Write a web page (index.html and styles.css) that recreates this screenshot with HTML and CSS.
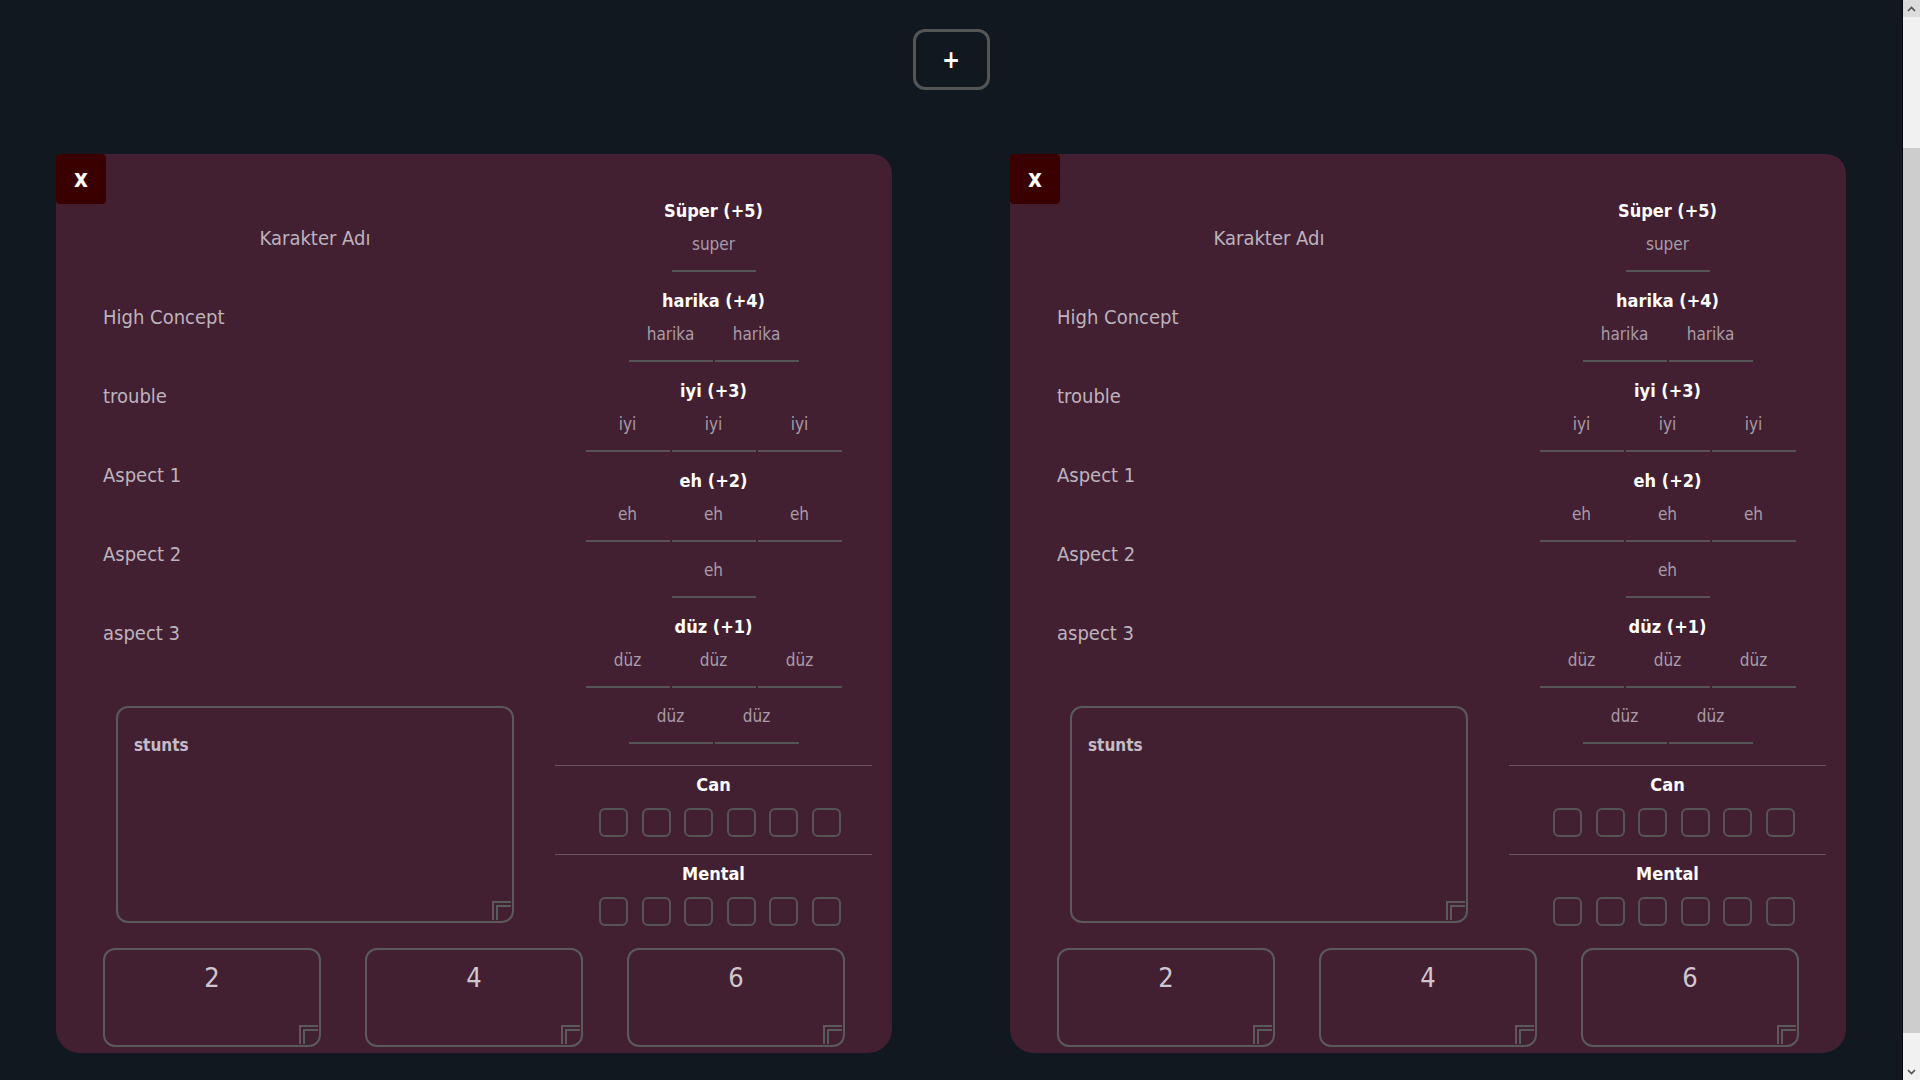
FILE: index.html
```html
<!DOCTYPE html>
<html lang="tr">
<head>
<meta charset="utf-8">
<title>Karakterler</title>
<link rel="stylesheet" href="styles.css">
</head>
<body>
<div class="page">
  <div class="toolbar"><button class="add-btn">+</button></div>
  <div class="cards">
    <section class="card">
      <button class="close-btn">x</button>
      <div class="card-top">
        <div class="aspects">
          <div class="field name">Karakter Adı</div>
          <div class="field">High Concept</div>
          <div class="field">trouble</div>
          <div class="field">Aspect 1</div>
          <div class="field">Aspect 2</div>
          <div class="field">aspect 3</div>
          <div class="stunts grip">stunts</div>
        </div>
        <div class="sheet">
          <div class="tier-title">Süper (+5)</div>
          <div class="tier-row"><span class="skill">super</span></div>
          <div class="tier-title">harika (+4)</div>
          <div class="tier-row"><span class="skill">harika</span><span class="skill">harika</span></div>
          <div class="tier-title">iyi (+3)</div>
          <div class="tier-row"><span class="skill">iyi</span><span class="skill">iyi</span><span class="skill">iyi</span></div>
          <div class="tier-title">eh (+2)</div>
          <div class="tier-row"><span class="skill">eh</span><span class="skill">eh</span><span class="skill">eh</span></div>
          <div class="tier-row"><span class="skill">eh</span></div>
          <div class="tier-title">düz (+1)</div>
          <div class="tier-row"><span class="skill">düz</span><span class="skill">düz</span><span class="skill">düz</span></div>
          <div class="tier-row"><span class="skill">düz</span><span class="skill">düz</span></div>
          <div class="stress stress-first">
            <div class="stress-title">Can</div>
            <div class="boxes"><span class="box"></span><span class="box"></span><span class="box"></span><span class="box"></span><span class="box"></span><span class="box"></span></div>
          </div>
          <div class="stress">
            <div class="stress-title">Mental</div>
            <div class="boxes"><span class="box"></span><span class="box"></span><span class="box"></span><span class="box"></span><span class="box"></span><span class="box"></span></div>
          </div>
        </div>
      </div>
      <div class="consequences">
        <div class="cons grip">2</div>
        <div class="cons grip">4</div>
        <div class="cons grip">6</div>
      </div>
    </section>
    <section class="card">
      <button class="close-btn">x</button>
      <div class="card-top">
        <div class="aspects">
          <div class="field name">Karakter Adı</div>
          <div class="field">High Concept</div>
          <div class="field">trouble</div>
          <div class="field">Aspect 1</div>
          <div class="field">Aspect 2</div>
          <div class="field">aspect 3</div>
          <div class="stunts grip">stunts</div>
        </div>
        <div class="sheet">
          <div class="tier-title">Süper (+5)</div>
          <div class="tier-row"><span class="skill">super</span></div>
          <div class="tier-title">harika (+4)</div>
          <div class="tier-row"><span class="skill">harika</span><span class="skill">harika</span></div>
          <div class="tier-title">iyi (+3)</div>
          <div class="tier-row"><span class="skill">iyi</span><span class="skill">iyi</span><span class="skill">iyi</span></div>
          <div class="tier-title">eh (+2)</div>
          <div class="tier-row"><span class="skill">eh</span><span class="skill">eh</span><span class="skill">eh</span></div>
          <div class="tier-row"><span class="skill">eh</span></div>
          <div class="tier-title">düz (+1)</div>
          <div class="tier-row"><span class="skill">düz</span><span class="skill">düz</span><span class="skill">düz</span></div>
          <div class="tier-row"><span class="skill">düz</span><span class="skill">düz</span></div>
          <div class="stress stress-first">
            <div class="stress-title">Can</div>
            <div class="boxes"><span class="box"></span><span class="box"></span><span class="box"></span><span class="box"></span><span class="box"></span><span class="box"></span></div>
          </div>
          <div class="stress">
            <div class="stress-title">Mental</div>
            <div class="boxes"><span class="box"></span><span class="box"></span><span class="box"></span><span class="box"></span><span class="box"></span><span class="box"></span></div>
          </div>
        </div>
      </div>
      <div class="consequences">
        <div class="cons grip">2</div>
        <div class="cons grip">4</div>
        <div class="cons grip">6</div>
      </div>
    </section>
  </div>
</div>
<div class="scrollbar" aria-hidden="true">
  <div class="sb-btn sb-up"><svg width="9" height="6" viewBox="0 0 9 6"><polyline points="1,5 4.5,1.5 8,5" fill="none" stroke="#505050" stroke-width="1.6"/></svg></div>
  <div class="sb-track-top"></div>
  <div class="sb-thumb"></div>
  <div class="sb-track"></div>
  <div class="sb-btn sb-down"><svg width="9" height="6" viewBox="0 0 9 6"><polyline points="1,1 4.5,4.5 8,1" fill="none" stroke="#505050" stroke-width="1.6"/></svg></div>
</div>
</body>
</html>
```

FILE: styles.css
```css
html, body {
  margin: 0;
  padding: 0;
}

body {
  background: #111820;
  font-family: "DejaVu Sans Condensed", "Liberation Sans", sans-serif;
  color: #bdb3bd;
  overflow: hidden;
}

.page {
  margin-right: 18px;
  padding: 29px 0 27px;
}

.toolbar {
  display: flex;
  justify-content: center;
}

.add-btn {
  width: 77px;
  height: 61px;
  box-sizing: border-box;
  border: 3px solid #555;
  border-radius: 12px;
  background: transparent;
  color: #fff;
  font-family: inherit;
  font-weight: 700;
  font-size: 24px;
  line-height: 1;
  padding: 0;
}

.cards {
  display: flex;
  justify-content: center;
  gap: 118px;
  margin-top: 64px;
}

.card {
  position: relative;
  width: 836px;
  height: 899px;
  box-sizing: border-box;
  background: #422032;
  border-radius: 20px 20px 24px 24px;
  padding: 28px 20px 6px 47px;
}

.close-btn {
  position: absolute;
  top: 0;
  left: 0;
  width: 50px;
  height: 50px;
  border: none;
  border-radius: 4px;
  background: #3a0000;
  color: #fff;
  font-family: inherit;
  font-weight: 700;
  font-size: 24px;
  line-height: 1;
  padding: 0;
}

.card-top {
  display: grid;
  grid-template-columns: 424px 317px;
  column-gap: 28px;
  align-items: start;
}

.aspects {
  padding-top: 17px;
}

.field {
  height: 79px;
  line-height: 79px;
  font-size: 20px;
  color: #bdb3bd;
}

.field.name {
  text-align: center;
}

.grip {
  position: relative;
}

.grip::before,
.grip::after {
  content: "";
  position: absolute;
  border-top: 2px solid #5a5a5a;
  border-left: 2px solid #5a5a5a;
  box-sizing: border-box;
}

.grip::before {
  right: 1px;
  bottom: 1px;
  width: 19px;
  height: 19px;
}

.grip::after {
  right: 1px;
  bottom: 1px;
  width: 15px;
  height: 15px;
}

.stunts {
  box-sizing: border-box;
  width: 398px;
  height: 217px;
  margin: 33px auto 0;
  border: 2px solid #5a5a5a;
  border-radius: 12px;
  padding: 27px 16px;
  font-weight: 700;
  font-size: 17px;
  line-height: 20px;
  color: #c6bcc6;
}

.tier-title {
  box-sizing: border-box;
  height: 34px;
  padding-top: 20px;
  line-height: 18px;
  font-weight: 700;
  font-size: 18px;
  color: #fff;
  text-align: center;
}

.tier-row {
  display: flex;
  justify-content: center;
  gap: 2px;
}

.skill {
  box-sizing: border-box;
  width: 84px;
  height: 56px;
  padding-top: 18px;
  border-bottom: 2px solid #555;
  font-size: 17px;
  line-height: 20px;
  text-align: center;
  color: #a99ba8;
}

.stress {
  border-top: 1px solid #69555f;
}

.stress-first {
  margin-top: 21px;
}

.stress + .stress {
  margin-top: 17px;
}

.stress-title {
  padding-top: 8px;
  line-height: 22px;
  font-weight: 700;
  font-size: 18px;
  color: #fff;
  text-align: center;
}

.boxes {
  display: flex;
  justify-content: center;
  gap: 13.5px;
  margin-top: 12px;
  padding-left: 13px;
}

.box {
  box-sizing: border-box;
  width: 29px;
  height: 29px;
  border: 2px solid #555;
  border-radius: 6px;
}

.consequences {
  display: flex;
  gap: 44px;
  width: 742px;
  margin-top: 22px;
}

.cons {
  flex: 1;
  box-sizing: border-box;
  height: 99px;
  border: 2px solid #5a5a5a;
  border-radius: 12px;
  padding-top: 12px;
  text-align: center;
  font-size: 27px;
  line-height: 32px;
  color: #cfc7cf;
}

.scrollbar {
  position: fixed;
  top: 0;
  right: 0;
  bottom: 0;
  width: 18px;
  box-sizing: border-box;
  border-left: 1px solid #05080b;
  display: flex;
  flex-direction: column;
  background: #f1f1f1;
}

.sb-btn {
  height: 17px;
  flex: none;
  display: flex;
  align-items: center;
  justify-content: center;
  background: #f1f1f1;
}

.sb-up {
  background: #dcdcdc;
}

.sb-track-top {
  height: 131px;
  flex: none;
}

.sb-thumb {
  height: 885px;
  flex: none;
  background: #cdcdcd;
}

.sb-track {
  flex: 1;
}
```
